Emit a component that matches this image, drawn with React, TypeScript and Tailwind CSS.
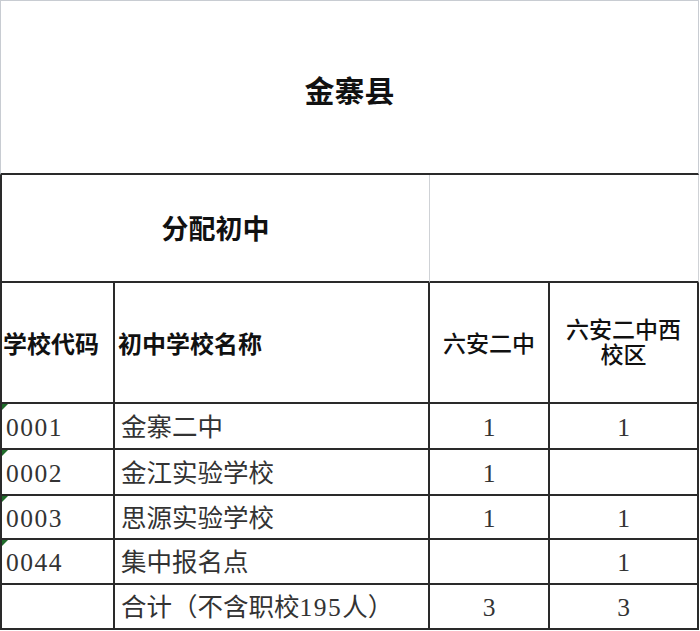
const head = "font-['Noto_Sans_CJK_SC',sans-serif] font-bold text-[#111]";
const body = "font-['Liberation_Serif','Noto_Sans_CJK_SC',serif] text-[25.5px] text-[#333]";
const line = 'border-[#2a2a2a]';

type Row = { code: string; name: string; a: string; b: string; h: string };

const rows: Row[] = [
  { code: '0001', name: '金寨二中', a: '1', b: '1', h: 'h-[46px]' },
  { code: '0002', name: '金江实验学校', a: '1', b: '', h: 'h-[46px]' },
  { code: '0003', name: '思源实验学校', a: '1', b: '1', h: 'h-[44px]' },
  { code: '0044', name: '集中报名点', a: '', b: '1', h: 'h-[45px]' },
];

function Marker() {
  return (
    <span className="absolute left-0 top-0 h-0 w-0 border-t-[6px] border-r-[6px] border-t-[#1f6b2a] border-r-transparent" />
  );
}

export default function App() {
  return (
    <div className="w-[700px] h-[631px] bg-white">
      <div className="grid w-[699px] grid-cols-[115px_315px_120px_149px]">
        {/* county title */}
        <div
          className={`col-span-4 flex h-[175px] items-center justify-center border-x border-t border-x-[#c8ccd2] border-t-[#c8ccd2] border-b-2 border-b-[#2a2a2a] pt-[4px] text-[30px] ${head}`}
        >
          金寨县
        </div>

        {/* allocation row */}
        <div
          className={`col-span-2 flex h-[108px] items-center justify-center border-l-2 border-b-2 ${line} border-r border-r-[#cfd2d6] text-[27px] ${head}`}
        >
          分配初中
        </div>
        <div className={`col-span-2 h-[108px] border-b-2 ${line} border-r border-r-[#cfd2d6]`} />

        {/* column headers */}
        <div className={`flex h-[121px] items-center border-l-2 border-r-2 border-b-2 ${line} pl-[1px] text-[24px] ${head}`}>
          学校代码
        </div>
        <div className={`flex h-[121px] items-center border-r-2 border-b-2 ${line} pl-[3px] text-[24px] ${head}`}>
          初中学校名称
        </div>
        <div className={`flex h-[121px] items-center justify-center border-r-2 border-b-2 ${line} text-[23px] font-medium ${head}`}>
          六安二中
        </div>
        <div
          className={`flex h-[121px] flex-col items-center justify-center gap-[1px] border-r-2 border-b-2 ${line} pb-[4px] text-[23px] leading-[24px] font-medium ${head}`}
        >
          <span>六安二中西</span>
          <span>校区</span>
        </div>

        {/* data rows */}
        {rows.map((r) => (
          <div key={r.code} className="contents">
            <div
              className={`relative flex ${r.h} items-center border-l-2 border-r-2 border-b-2 ${line} pl-[4px] pt-[4px] tracking-[1.5px] ${body}`}
            >
              <Marker />
              {r.code}
            </div>
            <div className={`flex ${r.h} items-center border-r-2 border-b-2 ${line} pl-[6px] pt-[4px] ${body}`}>
              {r.name}
            </div>
            <div className={`flex ${r.h} items-center justify-center border-r-2 border-b-2 ${line} pt-[4px] ${body}`}>
              {r.a}
            </div>
            <div className={`flex ${r.h} items-center justify-center border-r-2 border-b-2 ${line} pt-[4px] ${body}`}>
              {r.b}
            </div>
          </div>
        ))}

        {/* total row */}
        <div className={`h-[45px] border-l-2 border-r-2 border-b-2 ${line}`} />
        <div className={`flex h-[45px] items-center border-r-2 border-b-2 ${line} pl-[6px] pt-[4px] ${body}`}>
          合计（不含职校<span className="tracking-[1.5px]">195</span>人）
        </div>
        <div className={`flex h-[45px] items-center justify-center border-r-2 border-b-2 ${line} pt-[4px] ${body}`}>3</div>
        <div className={`flex h-[45px] items-center justify-center border-r-2 border-b-2 ${line} pt-[4px] ${body}`}>3</div>
      </div>
    </div>
  );
}
